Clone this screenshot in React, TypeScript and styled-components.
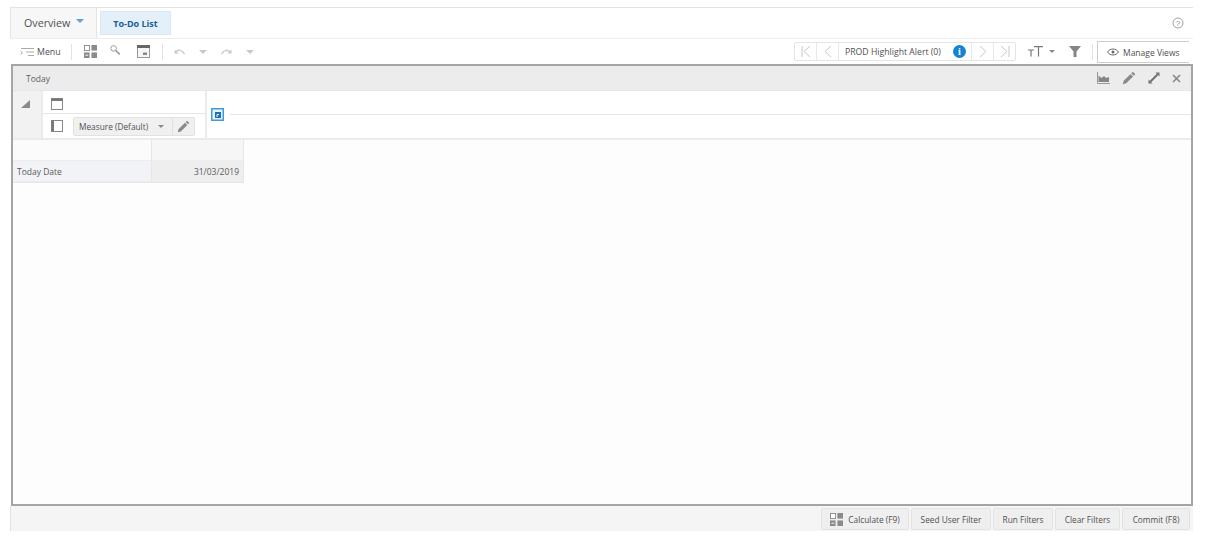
import styled, { createGlobalStyle } from 'styled-components';

const GlobalStyle = createGlobalStyle`
  html, body {
    margin: 0;
    background: #fff;
    font-family: "Open Sans", "Liberation Sans", sans-serif;
    color: #4a4a4a;
  }
  #root { height: 541px; }
`;

const Frame = styled.div`
  width: 1183px;
  height: 524px;
  margin: 7px 0 0 10px;
  display: flex;
  flex-direction: column;
  box-sizing: border-box;
`;

const TabBar = styled.div`
  height: 32px;
  flex: none;
  box-sizing: border-box;
  border-top: 1px solid #dfe3e6;
  border-bottom: 1px solid #eceff1;
  display: flex;
  align-items: stretch;
`;

const OverviewTab = styled.div`
  width: 87px;
  background: #f7f7f7;
  border-left: 1px solid #e4e4e4;
  border-right: 1px solid #e4e4e4;
  display: flex;
  align-items: center;
  gap: 6px;
  padding: 0 0 0 13px;
  box-sizing: border-box;
  font-size: 10.7px;
  color: #505050;
`;

const Caret = styled.span<{ $color?: string; $size?: number; $lift?: number }>`
  width: 0;
  height: 0;
  display: inline-block;
  border-left: ${(p) => p.$size ?? 4}px solid transparent;
  border-right: ${(p) => p.$size ?? 4}px solid transparent;
  border-top: ${(p) => p.$size ?? 4}px solid ${(p) => p.$color ?? '#8a8a8a'};
  margin-top: ${(p) => -(p.$lift ?? 0)}px;
`;

const ActiveTab = styled.div`
  width: 71px;
  height: 24px;
  margin: 3px 0 0 3px;
  padding-top: 1px;
  background: #e3f0f9;
  border: 1px solid #dce8f0;
  box-sizing: border-box;
  color: #1a5e96;
  font-size: 9px;
  font-weight: 700;
  display: flex;
  align-items: center;
  justify-content: center;
`;

const HelpSlot = styled.div`
  margin-left: auto;
  padding-right: 9px;
  display: flex;
  align-items: center;
`;

const Toolbar = styled.div`
  height: 25px;
  flex: none;
  display: flex;
  align-items: center;
  padding: 0 4px 0 10px;
`;

const ToolGroup = styled.div<{ $gap?: number; $ml?: number }>`
  display: flex;
  align-items: center;
  gap: ${(p) => p.$gap ?? 8}px;
  margin-left: ${(p) => p.$ml ?? 0}px;
`;

const ToolLabel = styled.span`
  font-size: 8.8px;
  color: #505050;
`;

const ToolDivider = styled.span<{ $ml?: number; $mr?: number }>`
  width: 1px;
  height: 16px;
  background: #e3e3e3;
  margin: 0 ${(p) => p.$mr ?? 10}px 0 ${(p) => p.$ml ?? 10}px;
`;

const RightTools = styled.div`
  margin-left: auto;
  display: flex;
  align-items: center;
  height: 100%;
`;

const SearchGlyph = styled.svg`
  margin: -4px 3px 0 0;
`;

const FilterSlot = styled.div`
  display: flex;
  margin-left: 14px;
`;

const Pager = styled.div`
  width: 222px;
  height: 19px;
  border: 1px solid #e2e4e6;
  border-radius: 2px;
  box-sizing: border-box;
  display: flex;
  align-items: stretch;
  font-size: 8.7px;
  color: #505050;
`;

const PagerCell = styled.div<{ $left?: boolean }>`
  width: 21px;
  display: flex;
  align-items: center;
  justify-content: center;
  ${(p) => (p.$left ? 'border-left: 1px solid #e8e8e8;' : 'border-right: 1px solid #e8e8e8;')}
`;

const PagerTitle = styled.div`
  flex: 1;
  display: flex;
  align-items: center;
  justify-content: space-between;
  padding: 0 5px 0 6px;
`;

const InfoDot = styled.span`
  width: 13px;
  height: 13px;
  border-radius: 50%;
  background: #1583d0;
  color: #fff;
  font: 700 10px "Liberation Serif", serif;
  display: flex;
  align-items: center;
  justify-content: center;
`;

const ManageViews = styled.div`
  width: 92px;
  height: 22px;
  margin-top: 1px;
  box-sizing: border-box;
  border: 1px solid #cfcfcf;
  border-right: none;
  display: flex;
  align-items: center;
  gap: 4px;
  padding-left: 9px;
  font-size: 8.5px;
  color: #505050;
`;

const Panel = styled.div`
  flex: 1;
  min-height: 0;
  margin-left: 1px;
  border: 2px solid #a5a5a5;
  background: #fdfdfd;
  display: flex;
  flex-direction: column;
`;

const PanelHeader = styled.div`
  height: 25px;
  flex: none;
  background: #ececec;
  border-bottom: 1px solid #e3e8ee;
  box-sizing: border-box;
  display: flex;
  align-items: center;
  justify-content: space-between;
  padding: 0 10px 0 13px;
  font-size: 8.5px;
  color: #606060;
`;

const HeaderIcons = styled.div`
  display: flex;
  align-items: center;
  gap: 12px;
`;

const PivotArea = styled.div`
  height: 49px;
  flex: none;
  display: flex;
  box-sizing: border-box;
  background: #fff;
  border-bottom: 2px solid #e8ecef;
`;

const CornerCell = styled.div`
  width: 30px;
  background: #f2f2f2;
  border-right: 2px solid #e8ecef;
  box-sizing: border-box;
  padding: 9px 0 0 8px;
  display: flex;
  align-items: flex-start;
`;

const AxisCell = styled.div`
  width: 164px;
  border-right: 2px solid #e8ecef;
  box-sizing: border-box;
  display: flex;
  flex-direction: column;
`;

const AxisTop = styled.div`
  height: 23px;
  flex: none;
  box-sizing: border-box;
  border-bottom: 1px solid #e6e6e6;
  display: flex;
  align-items: center;
  padding: 3px 0 0 8px;
`;

const AxisBottom = styled.div`
  flex: 1;
  display: flex;
  align-items: center;
  padding-left: 8px;
  gap: 10px;
`;

const MeasureSelect = styled.div`
  width: 122px;
  height: 19px;
  background: #f0f0f0;
  border: 1px solid #e2e2e2;
  border-radius: 2px;
  box-sizing: border-box;
  display: flex;
  align-items: center;
  font-size: 8.3px;
  color: #505050;
`;

const MeasureText = styled.div`
  flex: 1;
  display: flex;
  align-items: center;
  justify-content: space-between;
  padding: 0 8px 0 5px;
`;

const MeasureEdit = styled.div`
  width: 21px;
  height: 100%;
  border-left: 1px solid #e0e0e0;
  display: flex;
  align-items: center;
  justify-content: center;
`;

const ColumnAxis = styled.div`
  flex: 1;
  display: flex;
  align-items: center;
  padding: 0 0 0 4px;
  gap: 6px;
`;

const AxisLine = styled.span`
  flex: 1;
  height: 1px;
  background: #e6e6e6;
`;

const DataGrid = styled.div`
  display: grid;
  grid-template-columns: 138px 93px;
  grid-template-rows: 21px 21px;
  width: 231px;
  border-bottom: 1px solid #e6e6e6;
  font-size: 8.5px;
  color: #5a5a5a;
`;

const GridCell = styled.div<{ $bg: string; $end?: boolean; $divide?: boolean }>`
  background: ${(p) => p.$bg};
  display: flex;
  align-items: center;
  padding: 0 4px;
  box-sizing: border-box;
  border-bottom: 1px solid #ececec;
  ${(p) => p.$end && 'justify-content: flex-end; border-right: 1px solid #e6e6e6;'}
  ${(p) => p.$divide && 'border-left: 1px solid #e6e6e6;'}
`;

const FooterBar = styled.div`
  height: 25px;
  flex: none;
  background: #f5f5f5;
  border-left: 1px solid #e2e2e2;
  display: flex;
  align-items: center;
  justify-content: flex-end;
  gap: 2px;
  padding: 1px 3px 0 0;
  box-sizing: border-box;
`;

const FooterButton = styled.div<{ $width: number }>`
  width: ${(p) => p.$width}px;
  height: 22px;
  background: #efefef;
  border: 1px solid #e3e3e3;
  border-radius: 2px;
  box-sizing: border-box;
  display: flex;
  align-items: center;
  justify-content: center;
  gap: 5px;
  font-size: 8.3px;
  color: #505050;
`;

const CalcIcon = ({ size = 13 }: { size?: number }) => (
  <svg width={size} height={size} viewBox="0 0 14 14">
    <rect x="0.5" y="0.5" width="5.5" height="5.5" fill="#fff" stroke="#8a8a8a" />
    <rect x="8" y="0" width="6" height="6" fill="#8a8a8a" />
    <rect x="0" y="8" width="6" height="6" fill="#8a8a8a" />
    <rect x="8" y="8" width="6" height="6" fill="#8a8a8a" />
    <path d="M1.5 11h3M2 3.2h2.5" stroke="#fff" />
  </svg>
);

const PencilIcon = ({ size = 14 }: { size?: number }) => (
  <svg width={size} height={size} viewBox="0 0 14 14">
    <path d="M0.8 13.2l0.9-3.4 6.9-6.9 2.5 2.5-6.9 6.9zM9.3 2.2l1.5-1.5 2.5 2.5-1.5 1.5z" fill="#8a8a8a" />
  </svg>
);

const PagerIcon = ({ d }: { d: string }) => (
  <svg width="12" height="13" viewBox="0 0 12 13" fill="none" stroke="#c4c8cc" strokeWidth="1">
    <path d={d} />
  </svg>
);

export default function App() {
  return (
    <>
      <GlobalStyle />
      <Frame>
        <TabBar>
          <OverviewTab>
            Overview <Caret $color="#5ba3dd" $size={4} $lift={4} />
          </OverviewTab>
          <ActiveTab>To-Do List</ActiveTab>
          <HelpSlot>
            <svg width="12" height="12" viewBox="0 0 12 12">
              <circle cx="6" cy="6" r="5" fill="none" stroke="#a0a0a0" />
              <text x="6" y="8.8" fontSize="8" textAnchor="middle" fill="#909090" fontFamily="Liberation Sans">?</text>
            </svg>
          </HelpSlot>
        </TabBar>

        <Toolbar>
          <ToolGroup $gap={3}>
            <svg width="14" height="10" viewBox="0 0 14 10" fill="none" stroke="#aaa">
              <path d="M1 1.5h13M6 5h8M8 8.5h6M0.5 4l2 1.8-2 1.8" />
            </svg>
            <ToolLabel>Menu</ToolLabel>
          </ToolGroup>
          <ToolDivider $ml={10} $mr={12} />
          <ToolGroup $gap={13}>
            <CalcIcon />
            <SearchGlyph width="11" height="10" viewBox="0 0 11 10" fill="none" stroke="#999">
              <circle cx="3.6" cy="3.4" r="2.8" />
              <path d="M5.8 5.6l4 3.8" strokeWidth="1.5" />
            </SearchGlyph>
            <svg width="13" height="13" viewBox="0 0 13 13">
              <rect x="0.5" y="0.5" width="12" height="12" fill="#f6f6f6" stroke="#999" />
              <rect x="0" y="0" width="13" height="3" fill="#666" />
              <path d="M6 10V7.5h4V10z" fill="#888" />
            </svg>
          </ToolGroup>
          <ToolDivider $ml={12} $mr={11} />
          <ToolGroup $gap={14}>
            <svg width="11" height="7" viewBox="0 0 11 7" fill="none" stroke="#c8c8c8" strokeWidth="1.4">
              <path d="M2 4C4 1.5 8 1.5 10.5 6" />
              <path d="M0.5 1.5v4h4z" fill="#c8c8c8" stroke="none" />
            </svg>
            <Caret $color="#c8c8c8" $size={4} />
            <svg width="11" height="7" viewBox="0 0 11 7" fill="none" stroke="#c8c8c8" strokeWidth="1.4">
              <path d="M9 4C7 1.5 3 1.5 0.5 6" />
              <path d="M10.5 1.5v4h-4z" fill="#c8c8c8" stroke="none" />
            </svg>
            <Caret $color="#c8c8c8" $size={4} />
          </ToolGroup>

          <RightTools>
            <Pager>
              <PagerCell><PagerIcon d="M2 1v11M10 1L4 6.5 10 12" /></PagerCell>
              <PagerCell><PagerIcon d="M9 1L3 6.5 9 12" /></PagerCell>
              <PagerTitle>
                PROD Highlight Alert (0)
                <InfoDot>i</InfoDot>
              </PagerTitle>
              <PagerCell $left><PagerIcon d="M3 1l6 5.5L3 12" /></PagerCell>
              <PagerCell $left><PagerIcon d="M10 1v11M2 1l6 5.5L2 12" /></PagerCell>
            </Pager>
            <ToolGroup $gap={6} $ml={12}>
              <svg width="15" height="12" viewBox="0 0 15 12" fill="none" stroke="#777" strokeWidth="1.2">
                <path d="M0 4h6M3 4v6.5M6 0.7h9M10.5 0.7v9.8" />
              </svg>
              <Caret $size={3.5} />
            </ToolGroup>
            <FilterSlot>
              <svg width="12" height="11" viewBox="0 0 12 11">
                <path d="M0 0h12L7.5 5.5V11h-3V5.5z" fill="#858585" />
              </svg>
            </FilterSlot>
            <ToolDivider $ml={11} $mr={4} />
            <ManageViews>
              <svg width="12" height="8" viewBox="0 0 12 8" fill="none" stroke="#666">
                <path d="M0.5 4C3 0 9 0 11.5 4 9 8 3 8 0.5 4z" />
                <circle cx="6" cy="4" r="1.5" fill="#666" stroke="none" />
              </svg>
              Manage Views
            </ManageViews>
          </RightTools>
        </Toolbar>

        <Panel>
          <PanelHeader>
            Today
            <HeaderIcons>
              <svg width="13" height="12" viewBox="0 0 13 12">
                <path d="M0.5 0v11.5H13" fill="none" stroke="#999" />
                <path d="M1.5 10V3.5l3 2.5 2.5-2 2 2 3-1v5z" fill="#858585" />
              </svg>
              <PencilIcon />
              <svg width="12" height="12" viewBox="0 0 12 12">
                <path d="M2.5 9.5l7-7" stroke="#707070" strokeWidth="2" />
                <path d="M7.5 0.5H11.5V4.5zM0.5 7.5V11.5H4.5z" fill="#707070" />
              </svg>
              <svg width="9" height="9" viewBox="0 0 9 9" stroke="#858585" strokeWidth="1.5">
                <path d="M1 1l7 7M8 1l-7 7" />
              </svg>
            </HeaderIcons>
          </PanelHeader>

          <PivotArea>
            <CornerCell>
              <svg width="10" height="9" viewBox="0 0 10 9">
                <path d="M9 0v8H0z" fill="#8a8a8a" />
              </svg>
            </CornerCell>
            <AxisCell>
              <AxisTop>
                <svg width="12" height="12" viewBox="0 0 12 12">
                  <rect x="0.5" y="0.5" width="11" height="11" fill="#fff" stroke="#888" />
                  <rect x="0.5" y="0.5" width="11" height="2.5" fill="#777" />
                </svg>
              </AxisTop>
              <AxisBottom>
                <svg width="12" height="12" viewBox="0 0 12 12">
                  <rect x="0.5" y="0.5" width="11" height="11" fill="#fff" stroke="#888" />
                  <rect x="0.5" y="0.5" width="2.5" height="11" fill="#777" />
                </svg>
                <MeasureSelect>
                  <MeasureText>
                    Measure (Default)
                    <Caret $size={3.5} />
                  </MeasureText>
                  <MeasureEdit><PencilIcon size={13} /></MeasureEdit>
                </MeasureSelect>
              </AxisBottom>
            </AxisCell>
            <ColumnAxis>
              <svg width="13" height="13" viewBox="0 0 13 13">
                <rect x="0.75" y="0.75" width="11.5" height="11.5" fill="#e8f3fb" stroke="#3f9ae0" strokeWidth="1.5" />
                <rect x="4" y="4" width="6" height="6" fill="#1a6fb5" />
                <path d="M6 9V6.5h2" stroke="#fff" fill="none" />
              </svg>
              <AxisLine />
            </ColumnAxis>
          </PivotArea>

          <DataGrid>
            <GridCell $bg="#fbfbfb" />
            <GridCell $bg="#f6f6f6" $divide $end />
            <GridCell $bg="#f1f3f6">Today Date</GridCell>
            <GridCell $bg="#eeeeee" $divide $end>31/03/2019</GridCell>
          </DataGrid>
        </Panel>

        <FooterBar>
          <FooterButton $width={88}>
            <CalcIcon />
            Calculate (F9)
          </FooterButton>
          <FooterButton $width={80}>Seed User Filter</FooterButton>
          <FooterButton $width={60}>Run Filters</FooterButton>
          <FooterButton $width={65}>Clear Filters</FooterButton>
          <FooterButton $width={68}>Commit (F8)</FooterButton>
        </FooterBar>
      </Frame>
    </>
  );
}
